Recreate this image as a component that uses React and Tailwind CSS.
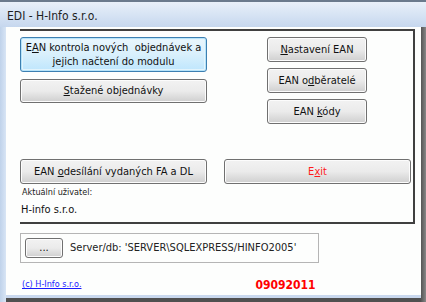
import React from 'react';

// Vista-style push button
function WinButton({ children, className = '', primary = false, red = false }) {
  const face = primary
    ? 'border-[#3c7fb1] bg-gradient-to-b from-[#eaf6fd] via-[#d9f0fc] to-[#bee6fd] shadow-[inset_0_0_0_1px_#b6e3f9,inset_0_0_0_2px_#e3f4fc]'
    : 'border-[#707070] bg-gradient-to-b from-[#f2f2f2] via-[#ebebeb] to-[#cfcfcf] shadow-[inset_0_0_0_1px_#fcfcfc]';
  return (
    <button
      type="button"
      className={`flex items-center justify-center border rounded-[3px] leading-[14px] text-[11px] whitespace-nowrap ${red ? 'text-[#ff1a1a]' : 'text-[#111]'} ${face} ${className}`}
    >
      {children}
    </button>
  );
}

export default function App() {
  return (
    <div
      className="w-[426px] h-[302px] flex flex-col bg-[#cfdcef] overflow-hidden"
      style={{ fontFamily: 'Tahoma, "DejaVu Sans Condensed", "Liberation Sans", sans-serif' }}
    >
      {/* title bar */}
      <div className="h-[27px] shrink-0 flex items-center px-[7px] pt-[2px] border-t-2 border-[#6b7a8c] bg-gradient-to-b from-[#e9f0f9] via-[#d7e4f4] to-[#c6d7ee] text-[12px] text-[#1e1e1e]">
        EDI - H-Info s.r.o.
      </div>

      <div className="flex flex-1 min-h-0">
        <div className="w-[6px] shrink-0 bg-gradient-to-r from-[#bfd2ea] to-[#d8e5f5]" />
        <div className="flex-1 flex flex-col">
          {/* client area */}
          <div className="flex-1 bg-[#fdfefd] flex flex-col pl-[14px] pt-[2px]">
            {/* upper panel */}
            <div className="w-[395px] h-[195px] border-t-2 border-r-2 border-b-2 border-[#404040] flex flex-col pt-[6px]">
              <div className="flex">
                <div className="w-[187px] flex flex-col gap-[7px]">
                  <WinButton primary className="h-[35px] flex-col">
                    <span>
                      E<span className="underline">A</span>N kontrola nových&nbsp; objednávek a
                    </span>
                    <span>jejich načtení do modulu</span>
                  </WinButton>
                  <WinButton className="h-[24px]">
                    <span>
                      <span className="underline">S</span>tažené objednávky
                    </span>
                  </WinButton>
                </div>
                <div className="ml-[60px] w-[100px] flex flex-col gap-[6px]">
                  <WinButton className="h-[25px]">
                    <span>
                      <span className="underline">N</span>astavení EAN
                    </span>
                  </WinButton>
                  <WinButton className="h-[25px]">
                    <span>
                      EAN o<span className="underline">d</span>běratelé
                    </span>
                  </WinButton>
                  <WinButton className="h-[25px]">
                    <span>
                      EAN <span className="underline">k</span>ódy
                    </span>
                  </WinButton>
                </div>
              </div>

              <div className="flex mt-[35px]">
                <WinButton className="w-[187px] h-[25px]">
                  <span>
                    EAN <span className="underline">o</span>desílání vydaných FA a DL
                  </span>
                </WinButton>
                <WinButton red className="ml-[17px] w-[187px] h-[25px]">
                  <span>
                    E<span className="underline">x</span>it
                  </span>
                </WinButton>
              </div>

              <div className="mt-[3px] pl-[2px] text-[9px] leading-[11px] text-[#222]">Aktuální uživatel:</div>
              <div className="mt-[5px] pl-[1px] text-[11px] leading-[13px] text-[#111]">H-info s.r.o.</div>
            </div>

            {/* server box */}
            <div className="mt-[9px] w-[299px] h-[30px] border border-[#b5b5b5] flex items-center pl-[4px]">
              <WinButton className="w-[38px] h-[20px]">
                <span className="leading-[8px]">...</span>
              </WinButton>
              <span className="ml-[7px] text-[11px] text-[#222]">Server/db: 'SERVER\SQLEXPRESS/HINFO2005'</span>
            </div>

            <div className="mt-[13px] flex items-center">
              <span className="pl-[2px] text-[9px] text-[#1a1aff] underline">(c) H-Info s.r.o.</span>
              <span className="ml-[174px] text-[12px] font-bold text-[#ff0000]">09092011</span>
            </div>
          </div>
          <div className="h-[3px] bg-[#c9d8ee]" />
          <div className="h-[4px] bg-[#505050]" />
        </div>
        <div className="w-[5px] shrink-0 bg-gradient-to-r from-[#555] to-[#888]" />
      </div>
    </div>
  );
}
